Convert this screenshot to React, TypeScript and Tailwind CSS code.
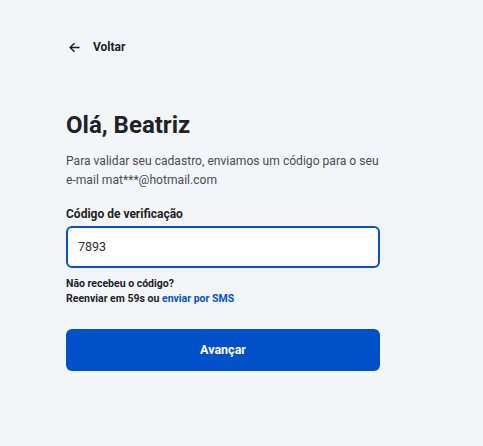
import React from "react";

export default function App() {
  return (
    <div className="min-h-[446px] w-full bg-[#f3f6f9] text-[#1f2226]" style={{ fontFamily: "Roboto, 'Noto Sans', sans-serif" }}>
      <div className="pl-[66px] pt-[38px] w-[380px]">
        <button className="flex items-center gap-[12px] ml-[2px] text-[12px] font-bold text-[#1f2226]">
          <svg width="13" height="13" viewBox="0 0 24 24" fill="none" stroke="currentColor" strokeWidth="2.8" strokeLinecap="square">
            <path d="M20 12H5" />
            <path d="M11 5l-7 7 7 7" strokeLinejoin="miter" />
          </svg>
          <span>Voltar</span>
        </button>

        <h1 className="mt-[54px] text-[24px] leading-[30px] font-bold text-[#1f2226]">Olá, Beatriz</h1>
        <p className="mt-[12px] text-[12.1px] leading-[19px] text-[#4a4d52]">
          Para validar seu cadastro, enviamos um código para o seu e-mail mat***@hotmail.com
        </p>

        <label className="block mt-[15px] text-[12px] leading-[18px] font-bold text-[#1f2226]">Código de verificação</label>
        <div className="mt-[3px] h-[42px] w-[314px] rounded-[6px] border-2 border-[#0a4fcf] bg-white flex items-center px-[10px]">
          <span className="text-[12.5px] text-[#2a2d31]">7893</span>
        </div>

        <p className="mt-[8px] text-[10.5px] leading-[15px] font-bold text-[#1f2226]">Não recebeu o código?</p>
        <p className="text-[10.5px] leading-[15px] font-bold text-[#1f2226]">
          Reenviar em 59s ou <span className="text-[#0a4fcf]">enviar por SMS</span>
        </p>

        <button className="mt-[23px] h-[42px] w-[314px] rounded-[6px] bg-[#0050c9] text-white text-[12.5px] font-bold">
          Avançar
        </button>
      </div>
    </div>
  );
}
